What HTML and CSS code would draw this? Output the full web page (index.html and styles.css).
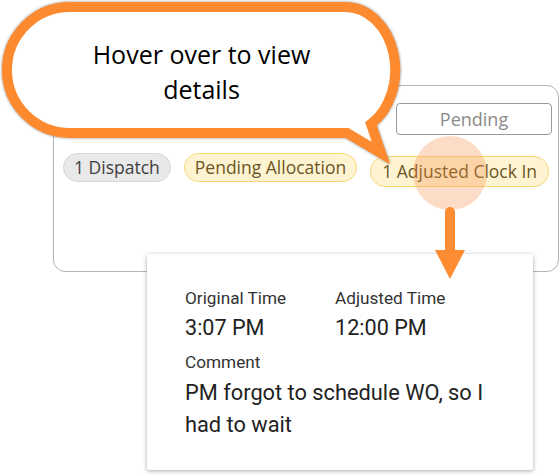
FILE: index.html
```html
<!DOCTYPE html>
<html>
<head>
<meta charset="utf-8">
<link rel="stylesheet" href="styles.css">
</head>
<body>
<div class="stage">
  <div class="card">
    <div class="card-top">
      <button class="status-btn">Pending</button>
    </div>
    <div class="chips">
      <span class="chip chip-gray">1 Dispatch</span>
      <span class="chip chip-yellow">Pending Allocation</span>
      <span class="chip chip-yellow chip-low">1 Adjusted Clock In</span>
    </div>
  </div>

  <div class="hover-dot"></div>

  <div class="tooltip">
    <div class="tt-grid">
      <div class="tt-col">
        <div class="tt-label">Original Time</div>
        <div class="tt-value">3:07 PM</div>
      </div>
      <div class="tt-col">
        <div class="tt-label">Adjusted Time</div>
        <div class="tt-value">12:00 PM</div>
      </div>
    </div>
    <div class="tt-label tt-comment-label">Comment</div>
    <div class="tt-comment">PM forgot to schedule WO, so I had to wait</div>
  </div>

  <svg class="arrow" width="560" height="475" viewBox="0 0 560 475">
    <line x1="450" y1="212" x2="450" y2="252" stroke="#fd8c33" stroke-width="10" stroke-linecap="round"/>
    <polygon points="435,250 465,250 450,279" fill="#fd8c33"/>
  </svg>

  <svg class="bubble" width="420" height="170" viewBox="0 0 420 170">
    <path d="M 70 7 H 345 A 50 63 0 0 1 371 124 L 381 153 L 347 133 H 70 A 63 63 0 0 1 70 7 Z"
      fill="#ffffff" stroke="#fd8a2e" stroke-width="10" stroke-linejoin="miter" stroke-miterlimit="10"/>
  </svg>
  <div class="bubble-text">Hover over to view<br>details</div>
</div>
</body>
</html>
```

FILE: styles.css
```css
html, body {
  margin: 0;
  padding: 0;
  background: #ffffff;
}

.stage {
  position: relative;
  width: 560px;
  height: 475px;
  overflow: hidden;
  font-family: "Open Sans", "Noto Sans", sans-serif;
}

.card {
  box-sizing: border-box;
  margin: 85px 0 0 53px;
  width: 506px;
  height: 187px;
  border: 1px solid #b4b4b4;
  border-radius: 12px;
  padding: 17px 6px 0 8px;
  display: flex;
  flex-direction: column;
}

.card-top {
  display: flex;
  justify-content: flex-end;
}

.status-btn {
  box-sizing: border-box;
  width: 156px;
  height: 32px;
  border: 1px solid #9a9a9a;
  border-radius: 4px;
  background: #ffffff;
  color: #8a8a8a;
  font-family: "Open Sans", "Noto Sans", sans-serif;
  font-size: 18px;
  padding: 0;
  line-height: 30px;
}

.chips {
  display: flex;
  align-items: flex-start;
  gap: 13px;
  margin-top: 18px;
  padding-left: 1px;
}

.chip {
  box-sizing: border-box;
  height: 29px;
  line-height: 27px;
  padding: 0 10px;
  border-radius: 15px;
  font-size: 17.5px;
  white-space: nowrap;
}

.chip-gray {
  background: #e9e9e9;
  border: 1px solid #d6d6d6;
  color: #3e3e3e;
}

.chip-yellow {
  background: #fff4d2;
  border: 1px solid #f6d878;
  color: #6a5624;
}

.chip-low {
  margin-top: 3px;
  height: 31px;
  line-height: 29px;
  padding: 0 11px;
}

.hover-dot {
  position: absolute;
  left: 413px;
  top: 136px;
  width: 74px;
  height: 74px;
  border-radius: 50%;
  background: rgba(250, 140, 70, 0.3);
}

.tooltip {
  position: absolute;
  left: 147px;
  top: 254px;
  width: 386px;
  height: 216px;
  box-sizing: border-box;
  background: #ffffff;
  box-shadow: 0 1px 4px rgba(0, 0, 0, 0.35);
  border-radius: 2px;
  padding: 32px 20px 0 38px;
  font-family: Roboto, "Liberation Sans", sans-serif;
  color: #2a2a2a;
}

.tt-grid {
  display: grid;
  grid-template-columns: 150px 1fr;
}

.tt-label {
  font-size: 17.2px;
  line-height: 24px;
  color: #333333;
}

.tt-value {
  font-size: 21.6px;
  line-height: 30px;
  margin-top: 3px;
  color: #222222;
}

.tt-comment-label {
  margin-top: 7px;
}

.tt-comment {
  margin-top: 3px;
  font-size: 21.8px;
  line-height: 31.5px;
  color: #222222;
}

.arrow {
  position: absolute;
  left: 0;
  top: 0;
  pointer-events: none;
}

.bubble {
  position: absolute;
  left: 0;
  top: 0;
  filter: drop-shadow(0 0 1.5px rgba(0, 0, 0, 0.45));
}

.bubble-text {
  position: absolute;
  left: 13px;
  top: 37px;
  width: 377px;
  text-align: center;
  font-family: "Open Sans", "Noto Sans", sans-serif;
  font-size: 25px;
  line-height: 35px;
  color: #000000;
}
```
